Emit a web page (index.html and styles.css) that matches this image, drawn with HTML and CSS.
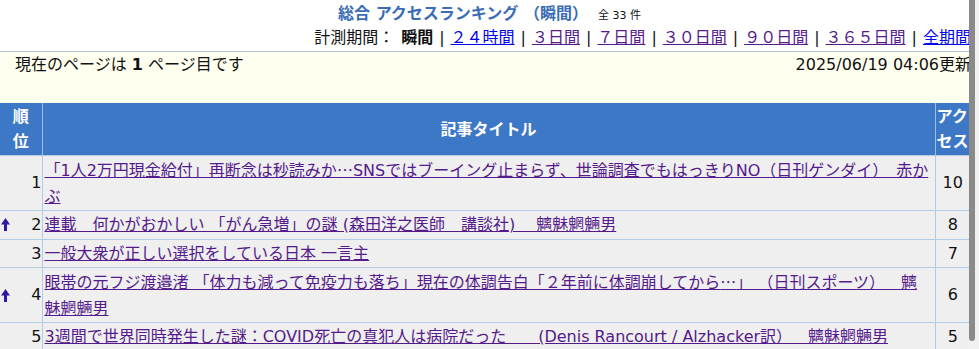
FILE: index.html
```html
<!DOCTYPE html>
<html lang="ja">
<head>
<meta charset="utf-8">
<title>総合 アクセスランキング</title>
<link rel="stylesheet" href="styles.css">
</head>
<body>
<div class="page">
  <h1 class="title"><span class="title-main">総合 アクセスランキング （瞬間）</span><span class="count">全 33 件</span></h1>
  <div class="periods">計測期間：<span class="gap"></span><b>瞬間</b><span class="sep">|</span><a class="lnk new" href="#">２４時間</a><span class="sep">|</span><a class="lnk" href="#">３日間</a><span class="sep">|</span><a class="lnk" href="#">７日間</a><span class="sep">|</span><a class="lnk" href="#">３０日間</a><span class="sep">|</span><a class="lnk" href="#">９０日間</a><span class="sep">|</span><a class="lnk" href="#">３６５日間</a><span class="sep">|</span><a class="lnk new" href="#">全期間</a></div>
  <div class="info">
    <span>現在のページは <b>1</b> ページ目です</span>
    <span>2025/06/19 04:06更新</span>
  </div>
  <table class="rank">
    <colgroup><col class="w-rank"><col class="w-title"><col class="w-acc"></colgroup>
    <thead>
      <tr><th class="h-rank">順位</th><th>記事タイトル</th><th class="h-acc">アクセス</th></tr>
    </thead>
    <tbody>
      <tr>
        <td class="c-rank"><div class="rk"><span class="num">1</span></div></td>
        <td class="c-title"><a class="lnk" href="#">「1人2万円現金給付」再断念は秒読みか<span class="jp">…</span>SNSではブーイング止まらず、世論調査でもはっきりNO（日刊ゲンダイ）　赤かぶ</a></td>
        <td class="c-acc">10</td>
      </tr>
      <tr>
        <td class="c-rank"><div class="rk"><svg class="up" viewBox="0 0 9 13" width="9" height="13"><polygon points="4.5,0 9,6.5 6,6.5 6,13 3,13 3,6.5 0,6.5"/></svg><span class="num">2</span></div></td>
        <td class="c-title"><a class="lnk" href="#">連載　何かがおかしい 「がん急増」の謎 (森田洋之医師　講談社)　 魑魅魍魎男</a></td>
        <td class="c-acc">8</td>
      </tr>
      <tr>
        <td class="c-rank"><div class="rk"><span class="num">3</span></div></td>
        <td class="c-title"><a class="lnk" href="#">一般大衆が正しい選択をしている日本 一言主</a></td>
        <td class="c-acc">7</td>
      </tr>
      <tr>
        <td class="c-rank"><div class="rk"><svg class="up" viewBox="0 0 9 13" width="9" height="13"><polygon points="4.5,0 9,6.5 6,6.5 6,13 3,13 3,6.5 0,6.5"/></svg><span class="num">4</span></div></td>
        <td class="c-title notrim"><a class="lnk" href="#">眼帯の元フジ渡邉渚 「体力も減って免疫力も落ち」現在の体調告白「２年前に体調崩してから<span class="jp">…</span>」 （日刊スポーツ）　魑魅魍魎男</a></td>
        <td class="c-acc">6</td>
      </tr>
      <tr>
        <td class="c-rank"><div class="rk"><span class="num">5</span></div></td>
        <td class="c-title notrim"><a class="lnk" href="#">3週間で世界同時発生した謎：COVID死亡の真犯人は病院だった　　(Denis Rancourt / Alzhacker訳）　魑魅魍魎男</a></td>
        <td class="c-acc">5</td>
      </tr>
    </tbody>
  </table>
</div>
<div class="scrollbar"><div class="thumb"></div></div>
</body>
</html>
```

FILE: styles.css
```css
html, body {
  margin: 0;
  padding: 0;
  background: #ffffff;
}
body {
  font-family: "DejaVu Sans", "Noto Sans CJK JP", sans-serif;
  font-size: 16px;
  color: #111111;
  overflow: hidden;
}
.jp {
  font-family: "Noto Sans CJK JP", sans-serif;
}
.page {
  width: 979px;
}
.title {
  margin: 0;
  padding-top: 3px;
  height: 21px;
  line-height: 21px;
  text-align: center;
  font-size: 16px;
  font-weight: bold;
  color: #3a6db5;
}
.count {
  margin-left: 10px;
  font-size: 11px;
  font-weight: normal;
  color: #111111;
}
.periods {
  text-align: right;
  padding-right: 8px;
  height: 24px;
  line-height: 24px;
  margin-top: 2px;
  white-space: nowrap;
}
.periods .gap {
  display: inline-block;
  width: 7px;
}
.periods .sep {
  margin: 0 6px 0 6px;
}
.periods b {
  font-weight: bold;
}
.lnk {
  color: #551a8b;
  text-decoration: underline;
}
.lnk.new {
  color: #0000ee;
}
.info {
  margin-top: 1px;
  border-top: 1px solid #b0c6de;
  background: #fffff0;
  height: 52px;
  box-sizing: border-box;
  display: flex;
  justify-content: space-between;
  align-items: flex-start;
  padding: 3px 8px 0 15px;
  line-height: 20px;
  white-space: nowrap;
}
.rank {
  width: 970px;
  border-collapse: collapse;
  table-layout: fixed;
}
.w-rank { width: 42px; }
.w-title { width: 893px; }
.w-acc { width: 35px; }
.rank th {
  background: #3c78c6;
  color: #ffffff;
  font-weight: bold;
  line-height: 25px;
  padding: 1px 2px 1px 2px;
  border-left: 1px solid #9dbde3;
  text-align: center;
  overflow: hidden;
  word-break: break-all;
}
.rank th.h-rank {
  border-left: none;
  padding: 1px 6px;
}
.rank th.h-acc {
  padding: 1px 0 1px 1px;
  text-align: left;
  white-space: normal;
}
.rank td {
  background: #efefef;
  line-height: 25.5px;
  padding: 1px 2px;
  border-bottom: 1px solid #b4cbe6;
  border-left: 1px solid #b4cbe6;
  vertical-align: middle;
}
.rank td:first-child {
  border-left: none;
}
.rank tbody tr:first-child td {
  border-top: 1px solid #b4cbe6;
}
.rank td.c-rank {
  padding: 1px 0 1px 1px;
}
.rk {
  display: flex;
  align-items: center;
}
.num {
  margin-left: auto;
}
.up {
  display: block;
  fill: #3516a3;
}
.rank td.c-title {
  text-align: left;
}
.notrim {
  text-spacing-trim: space-all;
}
.c-acc {
  text-align: center;
}
.scrollbar {
  position: fixed;
  top: 0;
  right: 0;
  width: 10px;
  height: 100%;
  background: #f1f1f1;
}
.thumb {
  position: absolute;
  left: 0;
  top: -8px;
  width: 6px;
  height: 349px;
  background: #8a8a8a;
  border-radius: 3px;
}
```
